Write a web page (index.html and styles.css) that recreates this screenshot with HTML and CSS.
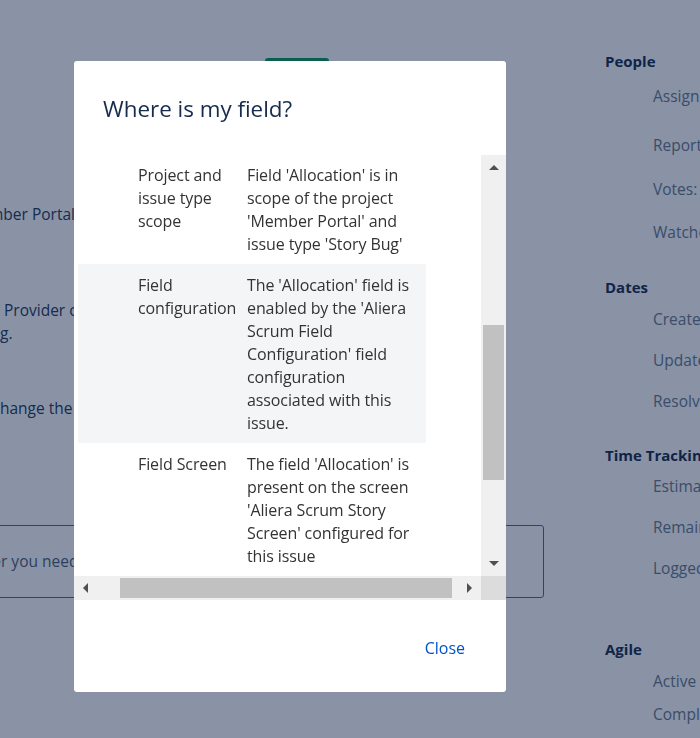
FILE: index.html
```html
<!DOCTYPE html>
<html lang="en">
<head>
<meta charset="utf-8">
<title>Where is my field?</title>
<link rel="stylesheet" href="styles.css">
</head>
<body>
<div class="page">
  <main class="main">
    <div class="toolbar"><button class="btn-primary" type="button">Edit</button></div>
    <div class="cut cut-m"><span class="hid">Project: Me</span><span class="vis">mber Portal</span></div>
    <div class="para">
      <div class="cut"><span class="hid">Please contact your</span><span class="vis"> Provider contact about this listing</span></div>
      <div class="cut"><span class="hid">listin</span><span class="vis">g.</span></div>
    </div>
    <div class="cut cut-line"><span class="hid">You can c</span><span class="vis">hange the details at any time</span></div>
    <div class="input-box">
      <div class="cut"><span class="hid">Describe whateve</span><span class="vis">r you need</span></div>
    </div>
  </main>
  <aside class="sidebar">
    <div class="side-h">People</div>
    <div class="side-i gap-11">Assignee:</div>
    <div class="side-i gap-25">Reporter:</div>
    <div class="side-i gap-20">Votes:</div>
    <div class="side-i gap-19">Watchers:</div>
    <div class="side-h gap-31">Dates</div>
    <div class="side-i gap-8">Created:</div>
    <div class="side-i gap-17">Updated:</div>
    <div class="side-i gap-17">Resolved:</div>
    <div class="side-h gap-30">Time Tracking</div>
    <div class="side-i gap-7">Estimated:</div>
    <div class="side-i gap-17">Remaining:</div>
    <div class="side-i gap-17">Logged:</div>
    <div class="side-h gap-57">Agile</div>
    <div class="side-i gap-8">Active Sprint:</div>
    <div class="side-i gap-9">Completed Sprint:</div>
  </aside>
</div>

<div class="blanket"></div>

<div class="modal" role="dialog" aria-label="Where is my field?">
  <div class="modal-header">
    <h2 class="modal-title">Where is my field?</h2>
  </div>
  <div class="modal-body">
    <div class="viewport">
      <table class="fields">
        <colgroup><col class="c-icon"><col class="c-name"><col class="c-desc"></colgroup>
        <tbody>
          <tr>
            <td></td>
            <td class="name">Project and<br>issue type<br>scope</td>
            <td>Field 'Allocation' is in<br>scope of the project<br>'Member Portal' and<br>issue type 'Story Bug'</td>
          </tr>
          <tr class="alt">
            <td></td>
            <td class="name">Field<br>configuration</td>
            <td>The 'Allocation' field is<br>enabled by the 'Aliera<br>Scrum Field<br>Configuration' field<br>configuration<br>associated with this<br>issue.</td>
          </tr>
          <tr>
            <td></td>
            <td class="name">Field Screen</td>
            <td>The field 'Allocation' is<br>present on the screen<br>'Aliera Scrum Story<br>Screen' configured for<br>this issue</td>
          </tr>
        </tbody>
      </table>
    </div>
    <div class="vscroll">
      <div class="sb-btn"><span class="tri tri-up"></span></div>
      <div class="sb-track-v"><div class="thumb-v"></div></div>
      <div class="sb-btn"><span class="tri tri-down"></span></div>
    </div>
    <div class="hscroll">
      <div class="sb-btn-h"><span class="tri tri-left"></span></div>
      <div class="sb-track-h"><div class="thumb-h"></div></div>
      <div class="sb-btn-h"><span class="tri tri-right"></span></div>
    </div>
    <div class="corner"></div>
  </div>
  <div class="modal-footer">
    <button class="link-btn" type="button">Close</button>
  </div>
</div>
</body>
</html>
```
FILE: styles.css
```css
* { box-sizing: border-box; }

html, body {
  margin: 0;
  padding: 0;
  height: 100%;
  overflow: hidden;
}

body {
  background: #ffffff;
  font-family: "Open Sans", "Noto Sans", "DejaVu Sans", sans-serif;
  color: #172b4d;
  font-size: 15.5px;
}

.page {
  display: flex;
  width: 700px;
  height: 738px;
  overflow: hidden;
}

.main {
  flex: 0 0 590px;
  display: flex;
  flex-direction: column;
  line-height: 23px;
  color: #253858;
}

.toolbar {
  padding-top: 58px;
  padding-left: 265px;
}

.btn-primary {
  display: block;
  width: 64px;
  height: 32px;
  border: 0;
  border-radius: 3px;
  background: #0d9959;
  color: #fff;
  font: inherit;
}

.cut {
  display: flex;
  margin-left: -300px;
  white-space: nowrap;
}
.cut .hid {
  flex: 0 0 300px;
  text-align: right;
}
.cut .vis { white-space: pre; }

.cut-m {
  margin-top: 113px;
  margin-left: -311px;
}

.para { margin-top: 73px; }

.cut-line { margin-top: 52px; }

.input-box {
  margin-top: 105px;
  margin-left: -40px;
  width: 584px;
  height: 73px;
  padding-left: 40px;
  border: 1px solid #3d6cb0;
  border-radius: 3px;
  display: flex;
  align-items: center;
  color: #505f79;
}

.sidebar {
  flex: 1;
  padding-left: 15px;
  padding-top: 49px;
  display: flex;
  flex-direction: column;
  white-space: nowrap;
  line-height: 24px;
}

.side-h {
  font-weight: 700;
  font-size: 15px;
  color: #172b4d;
}

.side-i {
  padding-left: 48px;
  color: #6b778c;
}

.gap-7 { margin-top: 7px; }
.gap-8 { margin-top: 8px; }
.gap-9 { margin-top: 9px; }
.gap-11 { margin-top: 11px; }
.gap-17 { margin-top: 17px; }
.gap-19 { margin-top: 19px; }
.gap-20 { margin-top: 20px; }
.gap-25 { margin-top: 25px; }
.gap-30 { margin-top: 30px; }
.gap-31 { margin-top: 31px; }
.gap-57 { margin-top: 57px; }

.blanket {
  position: fixed;
  inset: 0;
  background: rgba(9, 30, 66, 0.48);
}

.modal {
  position: absolute;
  left: 74px;
  top: 61px;
  width: 432px;
  height: 631px;
  background: #ffffff;
  border-radius: 3px;
  display: flex;
  flex-direction: column;
  overflow: hidden;
}

.modal-header {
  height: 94px;
  padding: 34px 0 0 29px;
}

.modal-title {
  margin: 0;
  font-size: 22.4px;
  line-height: 28px;
  font-weight: 400;
  color: #172b4d;
}

.modal-body {
  display: grid;
  grid-template-columns: 407px 25px;
  grid-template-rows: 421px 24px;
}

.viewport {
  overflow: hidden;
  padding-left: 4px;
}

.fields {
  table-layout: fixed;
  border-collapse: collapse;
  width: 348px;
  margin-top: -1px;
  color: #333333;
  font-size: 16px;
  line-height: 23px;
  letter-spacing: -0.1px;
}

.c-icon { width: 55px; }
.c-name { width: 109px; }
.c-desc { width: 184px; }

.fields td {
  padding: 10px 5px 8px;
  vertical-align: top;
  white-space: nowrap;
}

.fields td.name { padding-right: 2px; }

.fields tr.alt td { background: #f4f5f7; }

.vscroll {
  background: #f0f0f0;
  display: flex;
  flex-direction: column;
}

.sb-btn {
  flex: 0 0 25px;
  display: flex;
  align-items: center;
  justify-content: center;
}

.sb-track-v {
  flex: 1;
  padding: 0 2px;
}

.thumb-v {
  margin-top: 145px;
  height: 155px;
  background: #c1c1c1;
}

.hscroll {
  background: #f0f0f0;
  display: flex;
}

.sb-btn-h {
  flex: 0 0 23px;
  display: flex;
  align-items: center;
  justify-content: center;
}
.sb-btn-h:last-child { flex-basis: 24px; }

.sb-track-h {
  flex: 1;
  padding: 2px 0;
}

.thumb-h {
  margin-left: 23px;
  width: 332px;
  height: 100%;
  background: #c1c1c1;
}

.corner { background: #dcdcdc; }

.tri {
  width: 0;
  height: 0;
  border-style: solid;
}
.tri-up {
  border-width: 0 5px 5px 5px;
  border-color: transparent transparent #505050 transparent;
}
.tri-down {
  border-width: 5px 5px 0 5px;
  border-color: #505050 transparent transparent transparent;
}
.tri-left {
  border-width: 5px 5px 5px 0;
  border-color: transparent #505050 transparent transparent;
}
.tri-right {
  border-width: 5px 0 5px 5px;
  border-color: transparent transparent transparent #505050;
}

.modal-footer {
  flex: 1;
  display: flex;
  justify-content: flex-end;
  align-items: center;
  padding-right: 35px;
  padding-top: 4px;
}

.link-btn {
  border: 0;
  background: transparent;
  padding: 0 6px;
  font: inherit;
  font-size: 16px;
  color: #0052cc;
  line-height: 24px;
}
```
